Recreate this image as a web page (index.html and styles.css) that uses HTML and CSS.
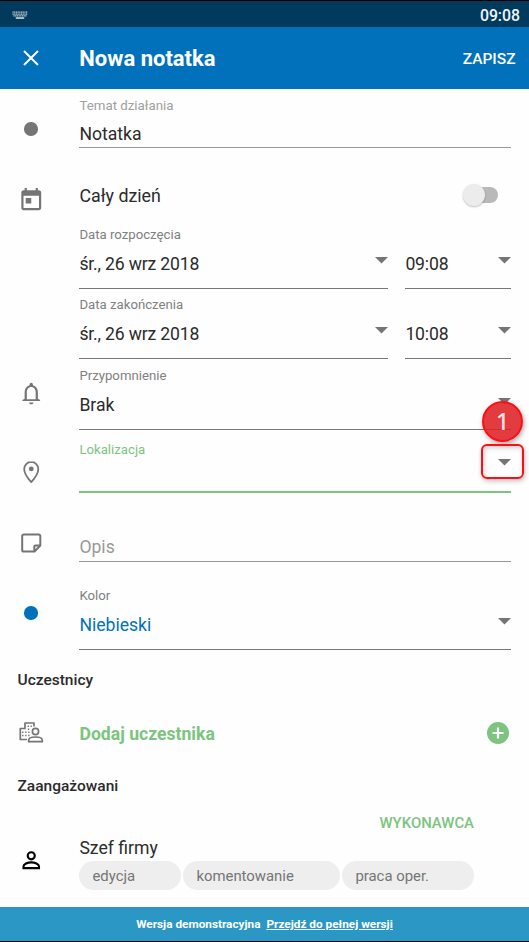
FILE: index.html
```html
<!DOCTYPE html>
<html lang="pl">
<head>
<meta charset="utf-8">
<title>Nowa notatka</title>
<link rel="stylesheet" href="styles.css">
</head>
<body>
<div class="screen">
  <div class="status">
    <svg class="keyboard" viewBox="0 0 17 9"><path d="M0.5 1h16M0.5 3h16M1.5 5h14" stroke-dasharray="1.3 .5"/><path d="M4 7.2h9" stroke-width="1.8"/></svg>
    <span>09:08</span>
  </div>
  <header class="appbar">
    <svg class="close" viewBox="0 0 16 16"><path d="M1 1l14 14M15 1L1 15"/></svg>
    <h1>Nowa notatka</h1>
    <span class="save">ZAPISZ</span>
  </header>

  <main>
    <section class="row subject">
      <div class="icon"><i class="dot"></i></div>
      <div class="field light"><label>Temat działania</label><div class="value">Notatka</div></div>
    </section>

    <section class="row allday">
      <div class="icon"><svg class="ic" viewBox="0 0 24 24"><path d="M19 3h-1V1h-2v2H8V1H6v2H5c-1.11 0-1.99.9-1.99 2L3 19c0 1.1.89 2 2 2h14c1.1 0 2-.9 2-2V5c0-1.1-.9-2-2-2zm0 16H5V8h14v11zM7 10h5v5H7z"/></svg></div>
      <div class="toggle-line"><span>Cały dzień</span><div class="switch"><i></i></div></div>
    </section>

    <section class="row date">
      <div></div>
      <div class="pair">
        <div class="field"><label>Data rozpoczęcia</label><div class="value">śr., 26 wrz 2018<i class="arrow"></i></div></div>
        <div class="field"><div class="value">09:08<i class="arrow"></i></div></div>
      </div>
    </section>

    <section class="row date second">
      <div></div>
      <div class="pair">
        <div class="field"><label>Data zakończenia</label><div class="value">śr., 26 wrz 2018<i class="arrow"></i></div></div>
        <div class="field"><div class="value">10:08<i class="arrow"></i></div></div>
      </div>
    </section>

    <section class="row reminder">
      <div class="icon"><svg class="ic" viewBox="0 0 24 24"><path d="M12 22c1.1 0 2-.7 2-1.7h-4c0 1 .9 1.700 2 1.700zM18 17v-6c0-3.070-1.630-5.640-4.500-6.320V4c0-.83-.67-1.500-1.500-1.500s-1.500.67-1.500 1.500v.68C7.640 5.360 6 7.920 6 11v6l-2 1v1h16v-1l-2-1zm-2 .5H8V11c0-2.480 1.510-4.700 4-4.700s4 2.220 4 4.700v6.500z"/></svg></div>
      <div class="field"><label>Przypomnienie</label><div class="value">Brak<i class="arrow"></i></div></div>
    </section>

    <section class="row location">
      <div class="icon"><svg class="ic stroked" viewBox="0 0 24 24"><path d="M12 2.700c-3.600 0-6.400 2.800-6.400 6.300 0 4.800 6.400 12 6.400 12s6.400-7.200 6.400-12c0-3.500-2.800-6.300-6.400-6.300z"/><circle class="solid" cx="12" cy="9" r="2.200"/></svg></div>
      <div class="field active"><label>Lokalizacja</label><div class="value"><i class="arrow"></i></div></div>
      <div class="marker">1</div>
      <div class="highlight"></div>
    </section>

    <section class="row note">
      <div class="icon"><svg class="ic stroked" viewBox="0 0 24 24"><path class="thick" d="M20.200 14V5.500c0-.9-.6-1.500-1.500-1.500H5.300c-.9 0-1.500.6-1.500 1.500v12.500c0 .9.6 1.500 1.500 1.500H15l5.200-5.500h-4.400c-.6 0-1 .4-1 1v4.500"/></svg></div>
      <div class="field light"><div class="value placeholder">Opis</div></div>
    </section>

    <section class="row color">
      <div class="icon"><i class="dot blue"></i></div>
      <div class="field"><label>Kolor</label><div class="value blue-text">Niebieski<i class="arrow"></i></div></div>
    </section>

    <h2>Uczestnicy</h2>

    <section class="row add">
      <div class="icon"><svg class="people" viewBox="0 0 26 22"><path d="M9 18.500H2.300V7.500H7V2h9v3.500"/><path d="M4.800 10.500v1.500M4.800 13.800v1.500M7.800 10.500v1.500M7.800 13.800v1.500M10.300 4.500v1.500M13.200 4.500v1.500M10.500 7.500v1.500M10.800 10.500v1.500M10.800 13.800v1.500" stroke-width="1.400"/><circle cx="17.500" cy="10.500" r="3.100"/><path d="M10.700 20.700v-1.500c0-2.400 3.800-3.200 6.800-3.200s6.800.8 6.800 3.200v1.500z"/></svg></div>
      <div class="add-line"><span>Dodaj uczestnika</span><svg class="plus" viewBox="0 0 22 22"><circle cx="11" cy="11" r="11"/><path d="M11 5.500v11M5.500 11h11"/></svg></div>
    </section>

    <h2 class="involved">Zaangażowani</h2>

    <section class="row person">
      <div class="icon"><svg class="ic stroked black" viewBox="0 0 24 24"><circle cx="12" cy="8" r="3.200"/><path d="M5 19.100v-1.600c0-2.100 3.800-3.600 7-3.600s7 1.500 7 3.600v1.600z"/></svg></div>
      <div class="details">
        <div class="role">WYKONAWCA</div>
        <div class="name">Szef firmy</div>
        <div class="chips"><span>edycja</span><span>komentowanie</span><span>praca oper.</span></div>
      </div>
    </section>
  </main>

  <footer><span>Wersja demonstracyjna</span><a>Przejdź do pełnej wersji</a></footer>
</div>
</body>
</html>
```
FILE: styles.css
```css
* { box-sizing: border-box; }
body {
  margin: 0;
  font-family: Roboto, "Liberation Sans", sans-serif;
  color: #2b2b2b;
  background: #fefefe;
}
.screen {
  width: 529px;
  height: 942px;
  display: flex;
  flex-direction: column;
  border-top: 1px solid #000;
  border-bottom: 1px solid #000;
  overflow: hidden;
}
.status {
  height: 26px;
  flex: none;
  display: flex;
  align-items: center;
  justify-content: space-between;
  padding: 2px 9px 0 12px;
  background: #003a5d;
  color: #f2f5f7;
  font-size: 15.8px;
  font-weight: 500;
}
.keyboard { width: 16px; height: 9px; fill: none; stroke: #c3d0d9; stroke-width: 1.3; }
.appbar {
  height: 62px;
  flex: none;
  display: flex;
  align-items: center;
  padding: 1px 13.5px 0 23px;
  background: #0071ba;
  color: #fff;
}
.close { width: 16px; height: 16px; margin-top: -1px; fill: none; stroke: #fff; stroke-width: 2; }
h1 { margin: 0 0 0 40.3px; font-size: 22px; font-weight: 700; line-height: 26px; }
.save { margin-left: auto; font-size: 15.5px; font-weight: 500; }

main { flex: 1; }
.row {
  position: relative;
  display: grid;
  grid-template-columns: 61.5px 432px;
  column-gap: 17.5px;
}
.icon { display: flex; justify-content: center; align-items: flex-start; }
.ic { width: 26.5px; height: 26.5px; fill: #757575; overflow: visible; }
.stroked { fill: none; stroke: #757575; stroke-width: 1.6; stroke-linejoin: round; }
.stroked.black { stroke: #000; stroke-width: 1.9; stroke-linejoin: miter; }
.thick { stroke-width: 1.8; }
.solid { fill: #757575; stroke: none; }
.dot { width: 13.5px; height: 13.5px; border-radius: 50%; background: #757575; }
.dot.blue { background: #0071ba; }

.field {
  display: flex;
  flex-direction: column;
  justify-content: flex-end;
  border-bottom: 1.5px solid #777;
}
label { padding-left: .4px; font-size: 13.2px; line-height: 16px; color: #808080; }
.value {
  height: 22px;
  margin: 10px 0 13px;
  padding-left: .4px;
  display: flex;
  justify-content: space-between;
  font-size: 17.6px;
  line-height: 22px;
}
.arrow {
  width: 13px;
  height: 6.5px;
  margin-top: 4px;
  background: #757575;
  clip-path: polygon(0 0, 100% 0, 50% 100%);
}
.light { border-color: #999; }
.light label { color: #a0a0a0; font-size: 13.3px; }

.subject { height: 59px; }
.subject .icon { padding-top: 33px; }
.subject .value { margin: 9px 0 2px; }

.allday { height: 70px; }
.allday .icon { padding-top: 39px; }
.toggle-line { height: 24px; margin-top: 35px; padding-left: .5px; display: flex; align-items: center; justify-content: space-between; font-size: 17.8px; }
.switch { width: 35px; height: 22px; margin-right: 13px; padding: 3px 0; }
.switch::before { content: ""; display: block; width: 29px; height: 16px; margin-left: 6px; border-radius: 8px; background: #b9b9b9; }
.switch i { display: block; width: 22px; height: 22px; margin-top: -19px; position: relative; border-radius: 50%; background: #ececec; box-shadow: 0 1px 2px rgba(0,0,0,.25); }

.date { height: 71px; }
.date .value { letter-spacing: -.16px; }
.date.second { height: 70px; }
.pair { display: grid; grid-template-columns: 309px 106px; column-gap: 17px; }

.reminder { height: 71px; }
.reminder .icon { padding-top: 20.5px; }

.location { height: 63px; }
.location .icon { padding-top: 28.5px; }
.active { border-bottom: 2px solid #7cc47f; }
.active label { color: #7cc47f; }
.active .value { margin: 0 0 11px; }
.active .arrow { margin-left: auto; margin-top: 1px; }
.marker {
  position: absolute;
  left: 482px;
  top: -29px;
  width: 41px;
  height: 41px;
  border: 2px solid #fb0f14;
  border-radius: 50%;
  background: rgba(222,33,37,.88);
  box-shadow: 1px 2px 5px rgba(0,0,0,.35);
  color: #f6e4e4;
  font: 500 23px/36px "Noto Sans", sans-serif;
  text-align: center;
}
.highlight {
  position: absolute;
  left: 481px;
  top: 14px;
  width: 43px;
  height: 35px;
  border: 2px solid #fb0f14;
  border-radius: 6px;
  box-shadow: 1px 2px 5px rgba(0,0,0,.25), inset 1px 2px 5px rgba(0,0,0,.18);
}

.note { height: 69px; }
.note .icon { padding-top: 36.5px; }
.note .value { margin: 0 0 3px; color: #999; }

.color { height: 88px; }
.color .icon { padding-top: 44px; }
.blue-text { color: #0071ba; }

h2 { margin: 20px 0 0 17.5px; font-size: 15.5px; line-height: 20px; font-weight: 500; }
.add { height: 68px; }
.add .icon { padding-top: 31px; }
.people { width: 26px; height: 22px; fill: none; stroke: #757575; stroke-width: 1.7; stroke-linejoin: round; }
.add-line { height: 24px; margin: 32px 2px 0 0; padding-left: .5px; display: flex; align-items: center; justify-content: space-between; color: #7cc47f; font-size: 17.6px; font-weight: 700; }
.plus { width: 22px; height: 22px; margin-top: -2px; fill: #7cc47f; stroke: #fff; stroke-width: 2.2; }
.plus circle { stroke: none; }
h2.involved { margin-top: 18px; }

.person { height: 100px; }
.person .icon { padding-top: 51px; }
.details { width: 395px; padding-top: 18px; }
.role { text-align: right; font-size: 14.9px; line-height: 18px; font-weight: 500; color: #7cc47f; }
.name { margin-top: 5px; padding-left: .4px; font-size: 17.6px; line-height: 22px; }
.chips { display: flex; gap: 2px; margin-top: 2px; }
.chips span { height: 29px; padding-left: 13.4px; border-radius: 15px; background: #eee; color: #757575; font-size: 14.9px; line-height: 31px; width: 102px; }
.chips span:nth-child(2) { width: 157px; }
.chips span:nth-child(3) { width: 132px; }

footer {
  height: 34px;
  flex: none;
  display: flex;
  align-items: center;
  justify-content: center;
  gap: 6px;
  background: #2a97c5;
  color: #fff;
  font-size: 11.8px;
  font-weight: 700;
}
footer a { text-decoration: underline; }
```
